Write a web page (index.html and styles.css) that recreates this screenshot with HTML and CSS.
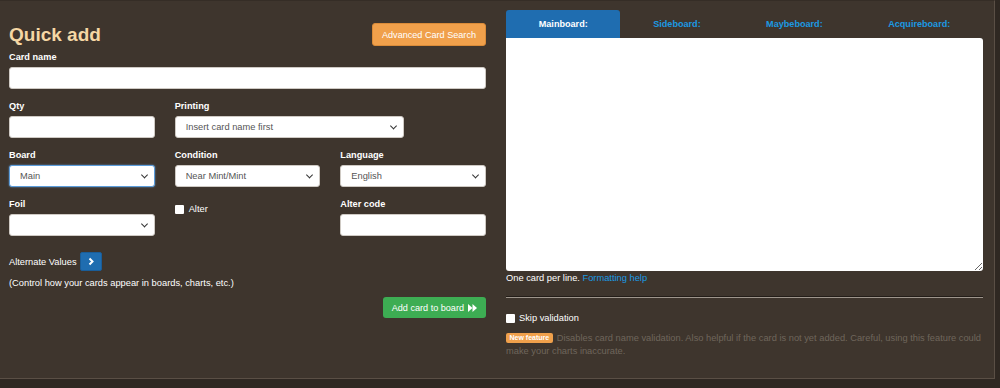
FILE: index.html
```html
<!DOCTYPE html>
<html lang="en">
<head>
	<meta charset="UTF-8">
	<title>Quick add</title>
	<link rel="stylesheet" href="styles.css">
</head>
<body>
	<div class="panel">
		<!-- quick add form -->
		<section class="quick-add">
			<div class="qa-head">
				<h1>Quick add</h1>
				<button class="btn btn-orange">Advanced Card Search</button>
			</div>

			<div class="field">
				<label>Card name</label>
				<input type="text" class="control">
			</div>

			<div class="grid">
				<div class="field">
					<label>Qty</label>
					<input type="text" class="control">
				</div>
				<div class="field span2">
					<label>Printing</label>
					<div class="select printing">
						<select class="control"><option>Insert card name first</option></select>
					</div>
				</div>

				<div class="field">
					<label>Board</label>
					<div class="select">
						<select class="control focus"><option>Main</option></select>
					</div>
				</div>
				<div class="field">
					<label>Condition</label>
					<div class="select">
						<select class="control"><option>Near Mint/Mint</option></select>
					</div>
				</div>
				<div class="field">
					<label>Language</label>
					<div class="select">
						<select class="control"><option>English</option></select>
					</div>
				</div>

				<div class="field">
					<label>Foil</label>
					<div class="select">
						<select class="control"><option></option></select>
					</div>
				</div>
				<div class="field check">
					<input type="checkbox" class="box"><span>Alter</span>
				</div>
				<div class="field">
					<label>Alter code</label>
					<input type="text" class="control">
				</div>
			</div>

			<div class="alt-row">
				<span>Alternate Values</span>
				<button class="alt-btn">
					<svg width="8" height="9" viewBox="0 0 8 9"><polyline points="2.5,1.5 5.5,4.5 2.5,7.5" fill="none" stroke="#fff" stroke-width="2"/></svg>
				</button>
			</div>
			<p class="note">(Control how your cards appear in boards, charts, etc.)</p>

			<div class="actions">
				<button class="btn btn-green">Add card to board
					<svg width="9" height="8" viewBox="0 0 9 8"><polygon points="0,0 4.5,4 0,8" fill="#fff"/><polygon points="4.5,0 9,4 4.5,8" fill="#fff"/></svg>
				</button>
			</div>
		</section>

		<!-- board text list -->
		<section class="board-list">
			<div class="tabs">
				<div class="tab active">Mainboard:</div>
				<div class="tab">Sideboard:</div>
				<div class="tab">Maybeboard:</div>
				<div class="tab">Acquireboard:</div>
			</div>
			<textarea class="list"></textarea>
			<p class="help">One card per line. <a href="#">Formatting help</a></p>
			<hr>
			<div class="skip">
				<input type="checkbox" class="box"><span>Skip validation</span>
			</div>
			<p class="feature"><span class="badge">New feature</span>Disables card name validation. Also helpful if the card is not yet added. Careful, using this feature could make your charts inaccurate.</p>
		</section>
	</div>
</body>
</html>
```

FILE: styles.css
```css
*{margin:0;padding:0;box-sizing:border-box;}
body{background:#2f2822;font-family:"Liberation Sans",Arial,sans-serif;font-size:9.3px;color:#fff;}

/*panel*/
.panel{display:flex;gap:20px;width:995px;height:379px;padding:9px 11px 0 9px;background:#3e352d;border-top:1px solid #352d26;border-right:1px solid #5a4f45;border-bottom:1px solid #5a4f45;}

/*quick add*/
.quick-add{width:477px;padding-top:13px;}
.qa-head{display:flex;justify-content:space-between;align-items:center;height:23px;}
.qa-head h1{font-size:19px;font-weight:bold;color:#f5d7a4;}

.btn{border:none;border-radius:3px;color:#fff;font-family:inherit;font-size:9.1px;padding:0 9px;}
.btn-orange{height:23px;background:#f0a04b;border:1px solid #d98b39;}
.btn-green{height:21px;background:#3dad53;display:flex;align-items:center;gap:4px;}

.field{display:flex;flex-direction:column;}
.quick-add > .field{margin-top:5px;}
.field label{display:block;font-weight:bold;font-size:9.2px;line-height:12px;margin-bottom:4px;}

.control{display:block;width:100%;height:22px;border:1px solid #cfcac4;border-radius:3px;background:#fff;font-family:inherit;font-size:9.3px;color:#555;padding:0 10px;outline:none;-webkit-appearance:none;appearance:none;}
.control.focus{border-color:#5c9ddb;box-shadow:0 0 2px rgba(92,157,219,.9);}

.select{position:relative;}
.select::after{content:"";position:absolute;right:8px;top:50%;width:4px;height:4px;border-right:1.5px solid #333;border-bottom:1.5px solid #333;transform:translateY(-70%) rotate(45deg);}
.select.printing{width:229px;}

.grid{display:grid;grid-template-columns:repeat(3,1fr);column-gap:20px;row-gap:11px;margin-top:11px;}
.span2{grid-column:span 2;}

.box{-webkit-appearance:none;appearance:none;width:9px;height:9px;background:#fff;border-radius:1px;flex:none;}
.check{flex-direction:row;align-items:center;gap:5px;padding-top:7px;align-self:start;line-height:9px;}

.alt-row{display:flex;align-items:center;gap:3px;margin-top:16px;}
.alt-btn{width:22px;height:19px;background:#1f6db0;border:1px solid #1a5d98;border-radius:2px;display:flex;align-items:center;justify-content:center;}
.note{margin-top:6px;line-height:12px;}
.actions{display:flex;justify-content:flex-end;margin-top:8px;}

/*board list*/
.board-list{width:477px;}
.tabs{display:flex;height:28px;}
.tab{flex:1 1 auto;text-align:center;font-weight:bold;font-size:9.1px;line-height:28px;color:#1b9ae3;}
.tab.active{background:#1f6db0;color:#fff;border-radius:3px 3px 0 0;}
.list{display:block;width:100%;height:233px;border:none;border-radius:0 3px 3px 3px;background:#fff;outline:none;resize:vertical;}
.help{margin-top:1px;line-height:12px;}
.help a{color:#1b9ae3;text-decoration:none;}
hr{margin-top:12px;border:0;border-top:1px solid #231d18;border-bottom:1px solid #9e958c;}
.skip{display:flex;align-items:center;gap:4px;margin-top:14px;line-height:12px;}
.feature{margin-top:8px;line-height:13px;color:#6f665c;}
.badge{display:inline-block;background:#f0a04b;color:#fff;font-weight:bold;font-size:7px;line-height:10px;padding:0 3.5px;border-radius:2px;margin-right:4px;vertical-align:1px;}
```
